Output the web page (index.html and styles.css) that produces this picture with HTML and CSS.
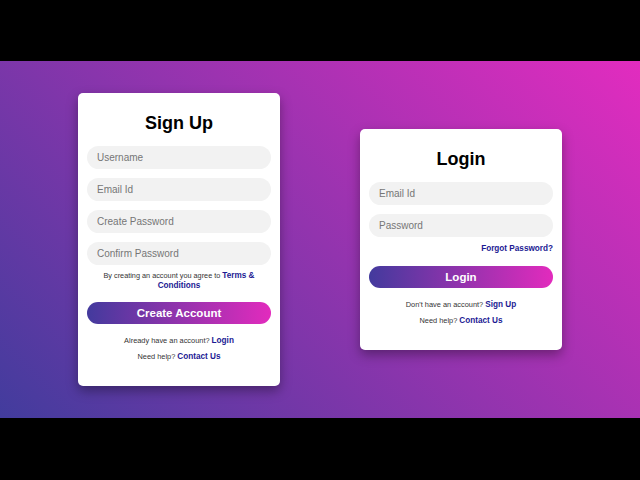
FILE: index.html
```html
<!DOCTYPE html>
<html>
<head>
<meta charset="utf-8">
<link rel="stylesheet" href="styles.css">
</head>
<body>
<div class="stage">
  <div class="card signup">
    <h1 class="title">Sign Up</h1>
    <div class="fields">
      <input class="field" type="text" placeholder="Username">
      <input class="field" type="text" placeholder="Email Id">
      <input class="field" type="password" placeholder="Create Password">
      <input class="field" type="password" placeholder="Confirm Password">
    </div>
    <p class="terms">By creating an account you agree to <a class="link" href="#">Terms &amp;</a> <a class="link" href="#">Conditions</a></p>
    <button class="btn btn-signup">Create Account</button>
    <p class="note note-first">Already have an account? <a class="link" href="#">Login</a></p>
    <p class="note">Need help? <a class="link" href="#">Contact Us</a></p>
  </div>
  <div class="card login">
    <h1 class="title">Login</h1>
    <div class="fields">
      <input class="field" type="text" placeholder="Email Id">
      <input class="field" type="password" placeholder="Password">
    </div>
    <div class="forgot"><a class="link" href="#">Forgot Password?</a></div>
    <button class="btn btn-login">Login</button>
    <p class="note note-first">Don't have an account? <a class="link" href="#">Sign Up</a></p>
    <p class="note">Need help? <a class="link" href="#">Contact Us</a></p>
  </div>
</div>
</body>
</html>
```
FILE: styles.css
```css
* { box-sizing: border-box; }
html, body {
  margin: 0;
  padding: 0;
  background: #000;
  width: 640px;
  height: 480px;
  overflow: hidden;
  font-family: "Liberation Sans", Arial, sans-serif;
}
.stage {
  margin-top: 61px;
  height: 357px;
  width: 640px;
  background: linear-gradient(45deg, #423c9d 0%, #e22cbf 100%);
  display: flex;
  justify-content: center;
  align-items: center;
  gap: 80px;
}
.card {
  width: 202px;
  background: #fff;
  border-radius: 5px;
  box-shadow: 0 5px 12px rgba(0, 0, 0, 0.35);
  padding: 19px 9px 24px;
  display: flex;
  flex-direction: column;
}
.title {
  margin: 0;
  font-size: 18px;
  line-height: 22px;
  font-weight: bold;
  text-align: center;
  color: #000;
}
.fields {
  margin-top: 12px;
  display: flex;
  flex-direction: column;
  gap: 9px;
}
.field {
  display: block;
  width: 100%;
  height: 23px;
  border: none;
  outline: none;
  border-radius: 12px;
  background: #f2f2f2;
  padding: 0 10px;
  font-family: "Liberation Sans", Arial, sans-serif;
  font-size: 10px;
  color: #333;
}
.field::placeholder { color: #767676; }
.link {
  color: #1c1a93;
  font-weight: bold;
  font-size: 8.2px;
  text-decoration: none;
}
.terms {
  margin: 6.5px 0 0;
  font-size: 7.3px;
  line-height: 10px;
  text-align: center;
  color: #333;
}
.btn {
  display: block;
  width: 100%;
  height: 22px;
  border: none;
  border-radius: 11px;
  background: linear-gradient(to right, #433a9d, #e22bbd);
  color: #fff;
  font-family: "Liberation Sans", Arial, sans-serif;
  font-weight: bold;
  font-size: 11.5px;
  padding: 0;
}
.btn-signup { margin-top: 11px; }
.btn-login { margin-top: 12px; }
.forgot {
  margin-top: 7px;
  text-align: right;
  font-size: 8.2px;
  line-height: 10px;
  height: 10px;
}
.note {
  margin: 6px 0 0;
  font-size: 7.4px;
  line-height: 10px;
  text-align: center;
  color: #333;
}
.note-first { margin-top: 12px; }
```
